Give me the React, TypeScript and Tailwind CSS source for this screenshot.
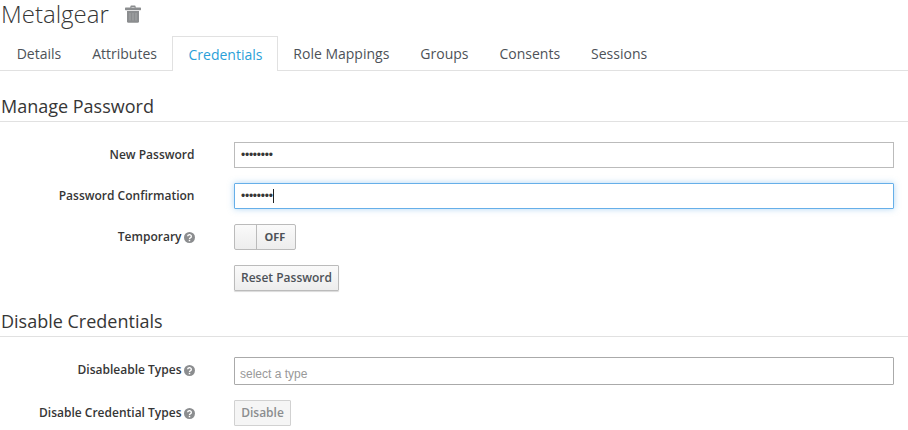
const TABS = ["Details", "Attributes", "Credentials", "Role Mappings", "Groups", "Consents", "Sessions"];

function Help() {
    return (
        <svg viewBox="0 0 24 24" className="w-[11px] h-[11px] ml-[2px] mt-[1px]">
            <circle cx="12" cy="12" r="12" fill="#8b8d8f" />
            <path d="M8 9.5a4 3.6 0 1 1 6 3.1c-1.3.8-2 1.3-2 2.9" fill="none" stroke="#fff" strokeWidth="3" />
            <rect x="10.4" y="17" width="3.2" height="3.2" fill="#fff" />
        </svg>
    );
}

function TrashIcon() {
    return (
        <svg viewBox="0 0 16 18" className="w-[16px] h-[18px] ml-[16px] mt-[5px]">
            <path d="M5.6 2.8 6.3 1.2h3.4l.7 1.6" fill="none" stroke="#8b8d8f" strokeWidth="1.4" />
            <rect x="0" y="2.6" width="16" height="2.6" rx="0.6" fill="#8b8d8f" />
            <path d="M2 6h12v10.4a1.4 1.4 0 0 1-1.4 1.4H3.4A1.4 1.4 0 0 1 2 16.4z" fill="#8b8d8f" />
            <path d="M5 8v7.5M8 8v7.5M11 8v7.5" stroke="#a8aaac" strokeWidth="0.9" />
        </svg>
    );
}

function Label({ text, help }: { text: string; help?: boolean }) {
    return (
        <div className="w-[194.5px] h-[26px] flex justify-end items-center text-[12px] font-semibold text-[#363636]">
            <span>{text}</span>
            {help && <Help />}
        </div>
    );
}

function Dots() {
    return <span className="text-[#363636] text-[12px] tracking-[-0.25px] font-['Liberation_Sans']">••••••••</span>;
}

export default function App() {
    return (
        <div className="w-[908px] h-[430px] overflow-hidden bg-white font-['Open_Sans',sans-serif] text-[#363636]">
            {/* Header */}
            <div className="h-[36px] flex items-start pl-[1px]">
                <h1 className="text-[24px] leading-[28px] font-light">Metalgear</h1>
                <TrashIcon />
            </div>

            {/* Tabs */}
            <div className="h-[35px] flex pl-[1.2px] border-b border-[#e1e1e1]">
                {TABS.map((tab) =>
                    tab === "Credentials" ? (
                        <div key={tab} className="-ml-[0.6px] h-[35px] pl-[15.6px] pr-[14.4px] flex items-center text-[14px] text-[#2a9fd8] bg-white border border-[#e1e1e1] border-b-0">
                            {tab}
                        </div>
                    ) : (
                        <div key={tab} className="h-[34px] px-[15.5px] flex items-center text-[14px] text-[#4d5258]">
                            {tab}
                        </div>
                    )
                )}
            </div>

            {/* Manage Password */}
            <div className="mt-[22px] h-[29px] pl-[1px] border-b border-[#e1e1e1] text-[18px] leading-[26px] text-[#363636]">
                Manage Password
            </div>

            <div className="mt-[20px] flex flex-col gap-[15px]">
                <div className="flex h-[26px]">
                    <Label text="New Password" />
                    <div className="ml-[39.5px] w-[660px] h-[26px] flex items-center px-[6px] border border-[#bbbbbb]">
                        <Dots />
                    </div>
                </div>
                <div className="flex h-[26px]">
                    <Label text="Password Confirmation" />
                    <div className="ml-[39.5px] w-[660px] h-[26px] flex items-center px-[6px] border border-[#66afe9] rounded-[1px] shadow-[0_0_6px_rgba(102,175,233,0.5)]">
                        <Dots />
                        <span className="w-px h-[14px] bg-[#222222]" />
                    </div>
                </div>
                <div className="flex h-[26px]">
                    <Label text="Temporary" help />
                    <div className="ml-[39.5px] w-[62px] h-[26px] flex border border-[#bbbbbb] rounded-[2px] bg-gradient-to-b from-[#fafafa] to-[#ededed]">
                        <div className="w-[22px] border-r border-[#bbbbbb]" />
                        <div className="flex-1 flex items-center justify-center pr-[2px] text-[11px] font-bold text-[#4d5258]">OFF</div>
                    </div>
                </div>
                <div className="flex h-[26px]">
                    <div className="w-[194.5px]" />
                    <button className="ml-[39.5px] w-[105px] h-[26px] border border-[#bbbbbb] rounded-[1px] bg-gradient-to-b from-[#fafafa] to-[#ededed] text-[12px] font-semibold text-[#4d5258] shadow-[0_1px_1px_rgba(0,0,0,0.15)]">
                        Reset Password
                    </button>
                </div>
            </div>

            {/* Disable Credentials */}
            <div className="mt-[16px] h-[30px] pl-[1px] border-b border-[#e1e1e1] text-[18px] leading-[29px] text-[#363636]">
                Disable Credentials
            </div>

            <div className="mt-[20px] flex flex-col gap-[15px]">
                <div className="flex h-[28px]">
                    <Label text="Disableable Types" help />
                    <div className="ml-[39.5px] w-[660px] h-[28px] flex items-end pb-[1px] px-[5px] border border-[#aaaaaa] rounded-[1px] text-[12px] text-[#999999] font-['Liberation_Sans']">
                        select a type
                    </div>
                </div>
                <div className="flex h-[26px]">
                    <Label text="Disable Credential Types" help />
                    <button className="ml-[39.5px] w-[57px] h-[26px] border border-[#d1d1d1] rounded-[1px] bg-[#f5f5f5] text-[12px] font-semibold text-[#8b8d8f]">
                        Disable
                    </button>
                </div>
            </div>
        </div>
    );
}
